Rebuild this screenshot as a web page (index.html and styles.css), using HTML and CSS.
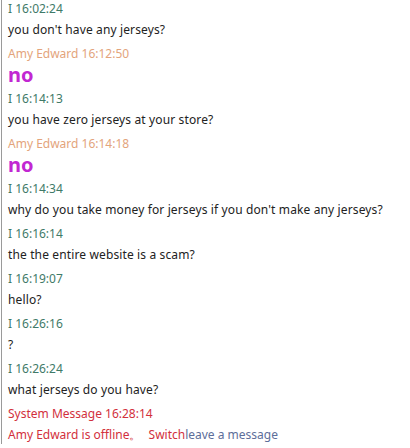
FILE: index.html
```html
<!DOCTYPE html>
<html>
<head>
<meta charset="utf-8">
<link rel="stylesheet" href="styles.css">
</head>
<body>
<div class="chat">
  <div class="msg"><div class="head me">I 16:02:24</div><div class="text">you don't have any jerseys?</div></div>
  <div class="msg"><div class="head agent">Amy Edward 16:12:50</div><div class="big">no</div></div>
  <div class="msg"><div class="head me">I 16:14:13</div><div class="text">you have zero jerseys at your store?</div></div>
  <div class="msg"><div class="head agent">Amy Edward 16:14:18</div><div class="big">no</div></div>
  <div class="msg"><div class="head me">I 16:14:34</div><div class="text">why do you take money for jerseys if you don't make any jerseys?</div></div>
  <div class="msg"><div class="head me">I 16:16:14</div><div class="text">the the entire website is a scam?</div></div>
  <div class="msg"><div class="head me">I 16:19:07</div><div class="text">hello?</div></div>
  <div class="msg"><div class="head me">I 16:26:16</div><div class="text">?</div></div>
  <div class="msg"><div class="head me">I 16:26:24</div><div class="text">what jerseys do you have?</div></div>
  <div class="msg"><div class="head sys">System Message 16:28:14</div><div class="text sys">Amy Edward is offline。 <span class="switch">Switch</span><span class="leave">leave a message</span></div></div>
</div>
</body>
</html>
```
FILE: styles.css
```css
html, body {
  margin: 0;
  padding: 0;
  background: #fff;
}
body {
  font-family: "Noto Sans", "Liberation Sans", sans-serif;
  font-size: 12px;
}
.chat {
  margin-left: 1px;
  border-left: 1px solid #9a9a9a;
  padding-left: 6px;
  height: 444px;
  overflow: hidden;
}
.msg {
  margin-bottom: 4px;
}
.head {
  line-height: 20px;
  height: 20px;
  margin-top: -1px;
}
.text {
  line-height: 22px;
  color: #222;
  letter-spacing: 0.13px;
}
.big {
  font-size: 20px;
  font-weight: bold;
  line-height: 22px;
  color: #c227d2;
}
.me { color: #3f7a68; }
.agent { color: #e3a47c; }
.sys, .text.sys { color: #d2303c; letter-spacing: 0; }
.switch { color: #d2303c; margin-left: 4px; }
.leave { color: #5d6e9a; }
```
